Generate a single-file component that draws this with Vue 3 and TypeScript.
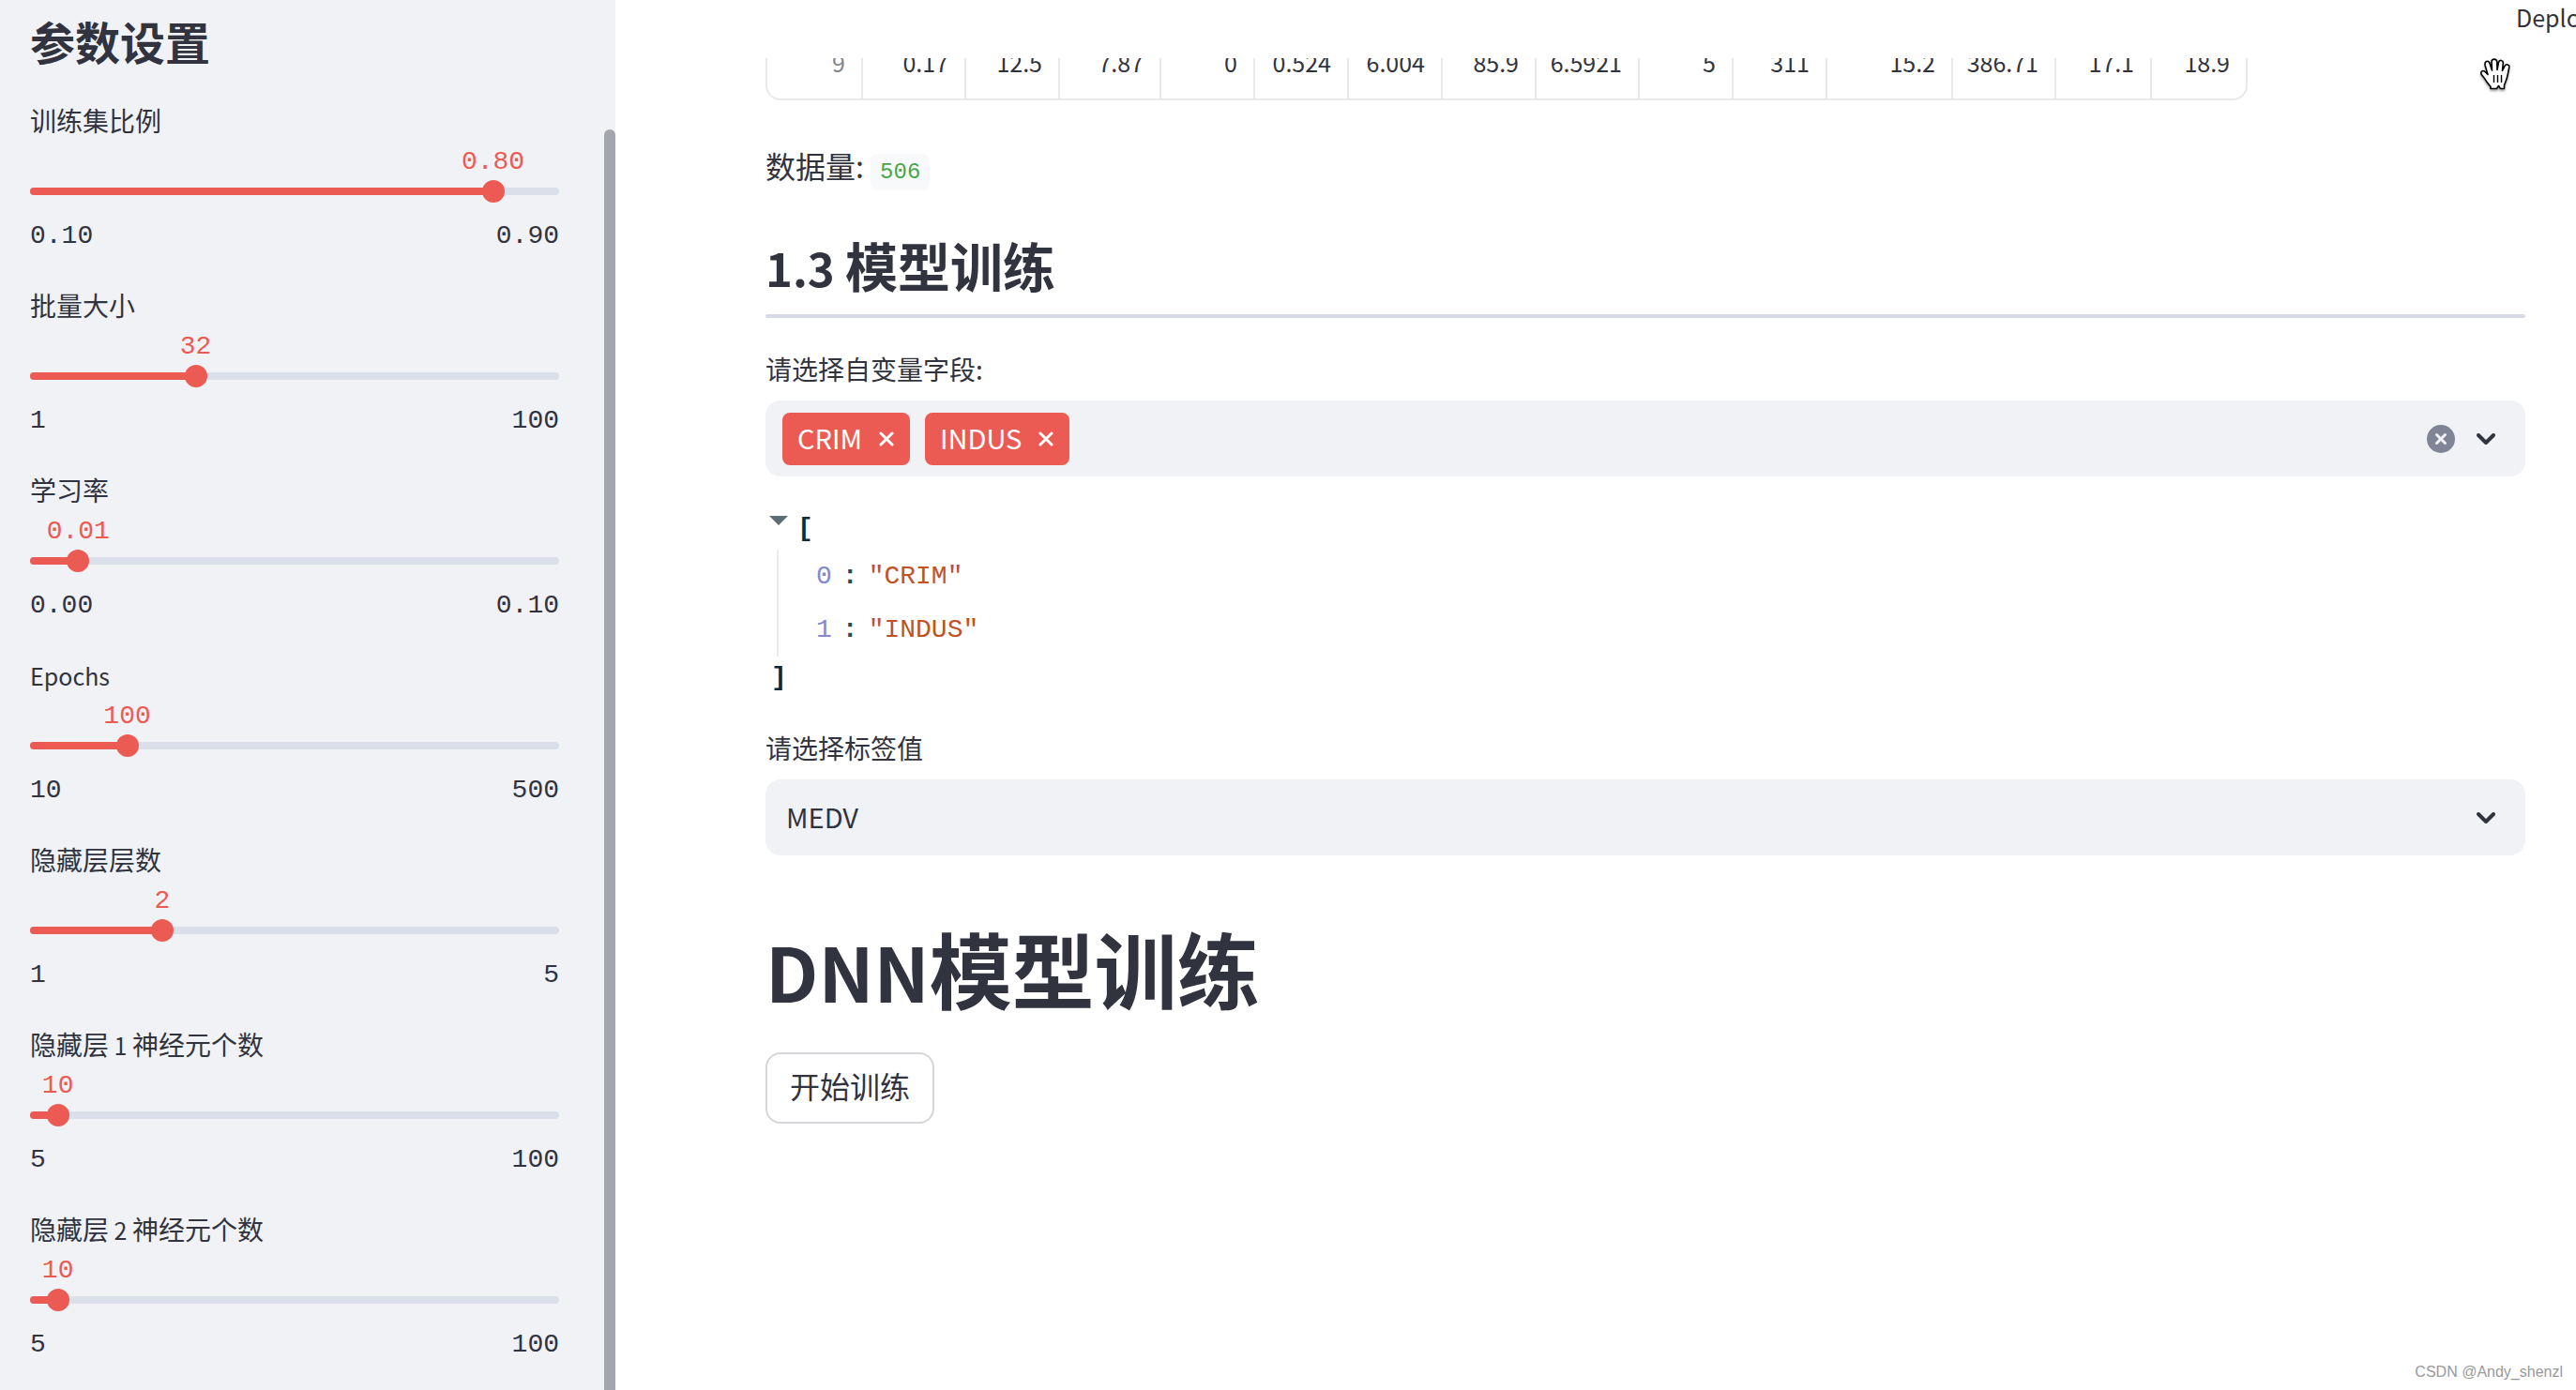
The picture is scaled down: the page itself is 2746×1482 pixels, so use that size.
<script setup lang="ts">
import { computed, ref } from 'vue'

interface SliderParam {
  id: string
  label: string
  min: number
  max: number
  step: number
  digits: number
  value: number
}

interface Run {
  text: string
  latin: boolean
}

const params = ref<SliderParam[]>([
  { id: 'train-ratio', label: '训练集比例', min: 0.1, max: 0.9, step: 0.01, digits: 2, value: 0.8 },
  { id: 'batch-size', label: '批量大小', min: 1, max: 100, step: 1, digits: 0, value: 32 },
  { id: 'learning-rate', label: '学习率', min: 0.001, max: 0.1, step: 0.001, digits: 2, value: 0.01 },
  { id: 'epochs', label: 'Epochs', min: 10, max: 500, step: 1, digits: 0, value: 100 },
  { id: 'layers', label: '隐藏层层数', min: 1, max: 5, step: 1, digits: 0, value: 2 },
  { id: 'units-1', label: '隐藏层 1 神经元个数', min: 5, max: 100, step: 1, digits: 0, value: 10 },
  { id: 'units-2', label: '隐藏层 2 神经元个数', min: 5, max: 100, step: 1, digits: 0, value: 10 },
])

const percent = (p: SliderParam): string => `${((p.value - p.min) / (p.max - p.min)) * 100}%`

// Latin runs are set smaller than the Chinese text beside them.
const runs = (text: string): Run[] =>
  (text.match(/[\x20-\x7e]+|[^\x20-\x7e]+/g) ?? []).map((t) => ({ text: t, latin: /^[\x20-\x7e]/.test(t) }))

const cells = [
  { text: '9', width: 100 },
  { text: '0.17', width: 110 },
  { text: '12.5', width: 100 },
  { text: '7.87', width: 108 },
  { text: '0', width: 100 },
  { text: '0.524', width: 100 },
  { text: '6.004', width: 100 },
  { text: '85.9', width: 100 },
  { text: '6.5921', width: 110 },
  { text: '5', width: 100 },
  { text: '311', width: 100 },
  { text: '15.2', width: 134 },
  { text: '386.71', width: 110 },
  { text: '17.1', width: 102 },
  { text: '18.9', width: 102 },
]
const tableWidth = computed(() => cells.reduce((sum, c) => sum + c.width, 0))

const features = ref<string[]>(['CRIM', 'INDUS'])
const target = ref('MEDV')
const open = ref(true)

const removeFeature = (name: string) => {
  features.value = features.value.filter((f) => f !== name)
}
</script>

<template>
  <div class="app">
    <aside class="sidebar">
      <h2 class="sidebar-title">参数设置</h2>
      <div v-for="p in params" :key="p.id" class="param">
        <label class="label" :for="p.id"><span v-for="(r, i) in runs(p.label)" :key="i" :class="{ latin: r.latin }">{{ r.text }}</span></label>
        <div class="value-row">
          <output class="value" :for="p.id" :style="{ left: percent(p) }">{{ p.value.toFixed(p.digits) }}</output>
        </div>
        <div class="slider">
          <div class="rail"><div class="fill" :style="{ width: percent(p) }"></div></div>
          <input :id="p.id" v-model.number="p.value" class="range" type="range" :min="p.min" :max="p.max" :step="p.step" />
        </div>
        <div class="bounds">
          <span>{{ p.min.toFixed(p.digits) }}</span>
          <span>{{ p.max.toFixed(p.digits) }}</span>
        </div>
      </div>
      <div class="scroll-thumb"></div>
    </aside>

    <main class="main">
      <header class="toolbar">
        <button class="deploy" type="button">Deploy</button>
      </header>

      <div class="frame">
        <table class="data" :style="{ width: `${tableWidth}px` }">
          <colgroup>
            <col v-for="(c, i) in cells" :key="i" :style="{ width: `${c.width}px` }" />
          </colgroup>
          <tbody>
            <tr>
              <template v-for="(c, i) in cells" :key="i">
                <th v-if="i === 0" scope="row">{{ c.text }}</th>
                <td v-else>{{ c.text }}</td>
              </template>
            </tr>
          </tbody>
        </table>
      </div>

      <p class="count">数据量: <code class="code">506</code></p>

      <h3 class="section"><span class="section-latin">1.3 </span>模型训练</h3>
      <hr class="divider" />

      <div class="field">
        <label class="label" for="features">请选择自变量字段:</label>
        <div class="box multi">
          <span v-for="f in features" :key="f" class="tag">
            <span class="tag-text">{{ f }}</span>
            <button class="icon-button" type="button" :aria-label="`Remove ${f}`" @click="removeFeature(f)">
              <svg width="16" height="16" viewBox="0 0 16 16"><path d="M2 2 14 14M14 2 2 14" stroke="#fff" stroke-width="3" stroke-linecap="round" /></svg>
            </button>
          </span>
          <input id="features" class="search" type="text" autocomplete="off" />
          <button class="icon-button clear" type="button" aria-label="Clear all" @click="features = []">
            <svg width="30" height="30" viewBox="0 0 30 30">
              <circle cx="15" cy="15" r="15" fill="#808495" />
              <path d="M10.5 10.5 19.5 19.5M19.5 10.5 10.5 19.5" stroke="#f0f2f6" stroke-width="3" stroke-linecap="round" />
            </svg>
          </button>
          <svg class="chevron" width="20" height="12" viewBox="0 0 20 12"><path d="M2 2 10 10 18 2" fill="none" stroke="#31333f" stroke-width="4" stroke-linecap="round" stroke-linejoin="round" /></svg>
        </div>
      </div>

      <div class="json">
        <div class="json-head">
          <button class="icon-button" type="button" aria-label="Toggle" @click="open = !open">
            <svg width="20" height="10" viewBox="0 0 20 10"><path d="M0 0H20L10 10Z" fill="#5c6d73" /></svg>
          </button>
          <span class="bracket">[</span>
        </div>
        <ul v-if="open" class="json-list">
          <li v-for="(f, i) in features" :key="f">
            <span class="key">{{ i }}</span><span class="colon">:</span><span class="string">"{{ f }}"</span>
          </li>
        </ul>
        <div class="json-foot bracket">]</div>
      </div>

      <div class="field">
        <label class="label" for="target">请选择标签值</label>
        <div class="box">
          <select id="target" v-model="target" class="select">
            <option>MEDV</option>
          </select>
          <svg class="chevron" width="20" height="12" viewBox="0 0 20 12"><path d="M2 2 10 10 18 2" fill="none" stroke="#31333f" stroke-width="4" stroke-linecap="round" stroke-linejoin="round" /></svg>
        </div>
      </div>

      <h1 class="title"><span class="title-latin">DNN</span>模型训练</h1>
      <button class="start" type="button">开始训练</button>

      <svg class="hand" width="34" height="36" viewBox="0 0 34 36">
        <path
          d="M12 32.5V30.5L8 25.5C6 22 4.5 20 2.3 17.5C.8 15 3 12.5 5.5 14L9 17.5L6.2 8C5 3 9.5 1.8 10.8 5L13.5 13L13 4C13 .2 18.5 .2 18.8 4L19 12.5L20.5 4.5C21.2 1.2 25.8 2 25.3 5.5L24.5 13.5L27 8.5C28.5 5.5 32.5 6.8 31.7 10C31 14 30.5 17 29.5 20.5C28.5 24.5 27 27 26.5 29V32.5H22.5L20.5 29.5L18.5 32.5Z"
          fill="#fff" stroke="#000" stroke-width="1.6" stroke-linejoin="round"
        />
        <path d="M15.5 18V26M19.5 18V26M23.5 18V26" stroke="#000" stroke-width="1.4" />
      </svg>
      <span class="watermark">CSDN @Andy_shenzl</span>
    </main>
  </div>
</template>

<style>
body {
  background: #fff;
}
</style>

<style scoped>
.app {
  display: flex;
  height: 100vh;
  overflow: hidden;
  color: #31333f;
  font-family: 'Noto Sans CJK SC', 'Noto Sans', sans-serif;
  font-size: 28px;
}

h1,
h2,
h3,
p,
ul {
  margin: 0;
  padding: 0;
}

button,
input,
select {
  margin: 0;
  padding: 0;
  border: 0;
  background: none;
  color: inherit;
  font-family: inherit;
}

.sidebar {
  position: relative;
  flex: 0 0 656px;
  box-sizing: border-box;
  padding: 13px 60px 0 32px;
  overflow: hidden;
  background: #f0f2f6;
}

.sidebar-title {
  margin-bottom: 35px;
  font-size: 48px;
  line-height: 60px;
}

.param {
  margin-bottom: 33px;
}

.label {
  display: block;
  font-size: 28px;
  line-height: 40px;
  white-space: pre;
}

.latin {
  font-size: 25px;
  line-height: 1;
}

.value-row {
  position: relative;
  height: 36px;
  margin-top: 8px;
}

.value {
  position: absolute;
  top: 0;
  transform: translateX(-50%);
  color: #ec5b53;
  font-family: 'Liberation Mono', monospace;
  line-height: 34px;
}

.slider {
  display: grid;
  align-items: center;
  height: 24px;
}

.rail,
.range {
  grid-area: 1 / 1;
}

.rail {
  height: 8px;
  border-radius: 4px;
  overflow: hidden;
  background: #dadfe9;
}

.fill {
  height: 100%;
  background: #ec5b53;
}

.range {
  appearance: none;
  width: calc(100% + 24px);
  height: 24px;
  margin: 0 -12px;
}

.range::-webkit-slider-thumb {
  appearance: none;
  width: 24px;
  height: 24px;
  border-radius: 50%;
  background: #ec5b53;
}

.bounds {
  display: flex;
  justify-content: space-between;
  margin-top: 16px;
  font-family: 'Liberation Mono', monospace;
  line-height: 40px;
}

.scroll-thumb {
  position: absolute;
  top: 138px;
  right: 0;
  bottom: 0;
  width: 12px;
  border-radius: 6px 6px 0 0;
  background: #a3a6ad;
}

.main {
  position: relative;
  flex: 1;
  min-width: 0;
  padding: 25px 54px 0 160px;
  overflow: hidden;
}

.toolbar {
  position: absolute;
  top: 0;
  left: 0;
  right: 0;
  z-index: 1;
  display: flex;
  justify-content: flex-end;
  height: 62px;
  overflow: hidden;
  background: #fff;
}

.deploy {
  flex: none;
  width: 64px;
  height: 36px;
  overflow: hidden;
  font-size: 25px;
  line-height: 36px;
  text-align: left;
}

.frame {
  width: max-content;
  border: 2px solid #e9e9eb;
  border-radius: 16px;
  overflow: hidden;
}

.data {
  table-layout: fixed;
  border-spacing: 0;
  font-size: 25px;
}

.data th,
.data td {
  box-sizing: border-box;
  height: 78px;
  padding: 0 17px 0 0;
  border-left: 2px solid #e9e9eb;
  font-weight: 400;
  text-align: right;
}

.data th {
  border-left: 0;
  color: #84858c;
}

.count {
  margin-top: 45px;
  font-size: 32px;
  line-height: 48px;
}

.code {
  padding: 6px 10px;
  border-radius: 8px;
  background: #f8f9fb;
  color: #4aa64c;
  font-family: 'Liberation Mono', monospace;
  font-size: 24px;
  line-height: 1;
}

.section {
  margin-top: 48px;
  font-size: 56px;
  line-height: 68px;
}

.section-latin {
  font-size: 49px;
  line-height: 1;
}

.divider {
  height: 4px;
  margin: 19px 0 0;
  border: 0;
  border-radius: 2px;
  background: #d6dbe7;
}

.field {
  margin-top: 34px;
}

.box {
  position: relative;
  box-sizing: border-box;
  height: 81px;
  margin-top: 14px;
  border-radius: 16px;
  background: #f0f2f6;
}

.multi {
  display: flex;
  align-items: center;
  gap: 16px;
  padding: 0 80px 0 18px;
}

.tag {
  display: flex;
  align-items: center;
  gap: 18px;
  height: 56px;
  padding: 0 17px 0 16px;
  border-radius: 8px;
  background: #ec5b53;
  color: #fff;
  font-size: 29px;
}

.tag-text {
  padding-bottom: 4px;
}

.icon-button {
  display: flex;
  cursor: pointer;
}

.search {
  flex: 1;
  min-width: 0;
  height: 56px;
  font-size: 29px;
  outline: 0;
}

.clear {
  margin-right: -5px;
}

.chevron {
  position: absolute;
  top: 35px;
  right: 32px;
  pointer-events: none;
}

.select {
  appearance: none;
  width: 100%;
  height: 100%;
  padding: 0 80px 4px 22px;
  font-size: 29px;
}

.json {
  margin-top: 36px;
  font-family: 'Liberation Mono', monospace;
  font-size: 28px;
  line-height: 40px;
}

.json-head {
  display: flex;
  gap: 10px;
  height: 40px;
  padding-left: 4px;
}

.json-head .icon-button {
  height: 10px;
  margin-top: 6px;
}

.bracket {
  color: #0b2c37;
  font-weight: 700;
}

.json-list {
  margin: 2px 0 3px 12px;
  border-left: 2px solid #ebebeb;
  list-style: none;
}

.json-list li {
  display: flex;
  padding-left: 40px;
  line-height: 57px;
}

.key {
  color: #8289cc;
}

.colon {
  padding: 0 11px;
  color: #2b4a52;
  font-weight: 700;
}

.string {
  color: #bf5326;
}

.json-foot {
  padding-left: 6px;
}

.title {
  margin-top: 66px;
  font-size: 88px;
  line-height: 106px;
}

.title-latin {
  font-size: 79px;
  line-height: 1;
}

.start {
  display: block;
  height: 76px;
  margin-top: 38px;
  padding: 0 24px 6px;
  border: 2px solid #d5d6d9;
  border-radius: 16px;
  background: #fff;
  font-size: 32px;
}

.hand {
  position: absolute;
  top: 62px;
  right: 69px;
  z-index: 2;
  filter: drop-shadow(0 2px 1px rgba(0, 0, 0, 0.35));
}

.watermark {
  position: absolute;
  right: 14px;
  bottom: 9px;
  color: #999;
  font-family: 'Liberation Sans', Arial, sans-serif;
  font-size: 16px;
  line-height: 20px;
}
</style>
